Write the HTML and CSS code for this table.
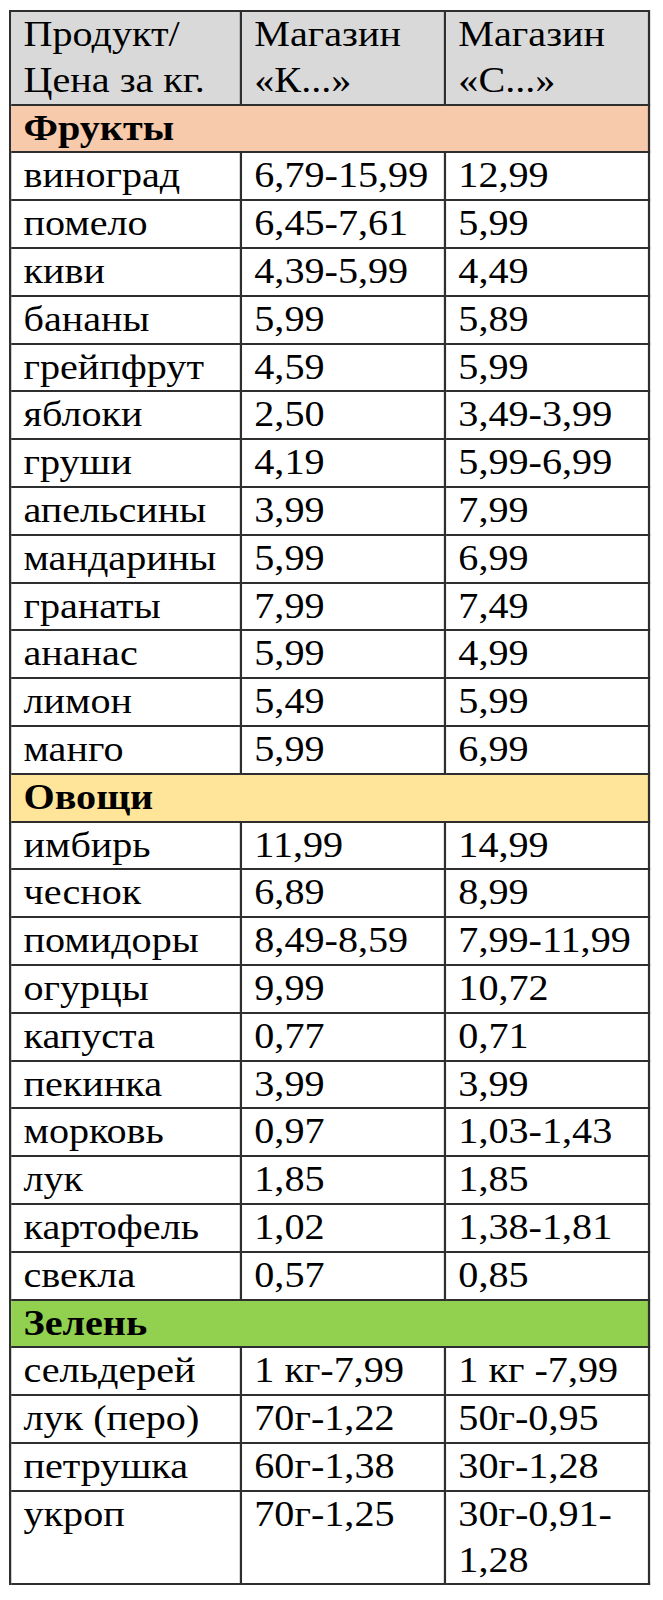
FILE: index.html
```html
<!DOCTYPE html>
<html lang="ru">
<head>
<meta charset="utf-8">
<title>Цены</title>
<link rel="stylesheet" href="styles.css">
</head>
<body>
<table class="prices">
  <colgroup>
    <col class="c1"><col class="c2"><col class="c3">
  </colgroup>
  <thead>
    <tr class="head">
      <th>Продукт/<br>Цена за кг.</th>
      <th>Магазин<br>«К...»</th>
      <th>Магазин<br>«С...»</th>
    </tr>
  </thead>
  <tbody>
    <tr class="cat fruit"><td colspan="3">Фрукты</td></tr>
    <tr><td>виноград</td><td>6,79-15,99</td><td>12,99</td></tr>
    <tr><td>помело</td><td>6,45-7,61</td><td>5,99</td></tr>
    <tr><td>киви</td><td>4,39-5,99</td><td>4,49</td></tr>
    <tr><td>бананы</td><td>5,99</td><td>5,89</td></tr>
    <tr><td>грейпфрут</td><td>4,59</td><td>5,99</td></tr>
    <tr><td>яблоки</td><td>2,50</td><td>3,49-3,99</td></tr>
    <tr><td>груши</td><td>4,19</td><td>5,99-6,99</td></tr>
    <tr><td>апельсины</td><td>3,99</td><td>7,99</td></tr>
    <tr><td>мандарины</td><td>5,99</td><td>6,99</td></tr>
    <tr><td>гранаты</td><td>7,99</td><td>7,49</td></tr>
    <tr><td>ананас</td><td>5,99</td><td>4,99</td></tr>
    <tr><td>лимон</td><td>5,49</td><td>5,99</td></tr>
    <tr><td>манго</td><td>5,99</td><td>6,99</td></tr>
    <tr class="cat veg"><td colspan="3">Овощи</td></tr>
    <tr><td>имбирь</td><td>11,99</td><td>14,99</td></tr>
    <tr><td>чеснок</td><td>6,89</td><td>8,99</td></tr>
    <tr><td>помидоры</td><td>8,49-8,59</td><td>7,99-11,99</td></tr>
    <tr><td>огурцы</td><td>9,99</td><td>10,72</td></tr>
    <tr><td>капуста</td><td>0,77</td><td>0,71</td></tr>
    <tr><td>пекинка</td><td>3,99</td><td>3,99</td></tr>
    <tr><td>морковь</td><td>0,97</td><td>1,03-1,43</td></tr>
    <tr><td>лук</td><td>1,85</td><td>1,85</td></tr>
    <tr><td>картофель</td><td>1,02</td><td>1,38-1,81</td></tr>
    <tr><td>свекла</td><td>0,57</td><td>0,85</td></tr>
    <tr class="cat green"><td colspan="3">Зелень</td></tr>
    <tr><td>сельдерей</td><td>1 кг-7,99</td><td>1 кг -7,99</td></tr>
    <tr><td>лук (перо)</td><td>70г-1,22</td><td>50г-0,95</td></tr>
    <tr><td>петрушка</td><td>60г-1,38</td><td>30г-1,28</td></tr>
    <tr><td>укроп</td><td>70г-1,25</td><td>30г-0,91-<br>1,28</td></tr>
  </tbody>
</table>
</body>
</html>
```
FILE: styles.css
```css
html, body {
  margin: 0;
  padding: 0;
  background: #ffffff;
}

body {
  padding: 10px 0 0 9px;
  font-family: "Liberation Serif", "Times New Roman", serif;
  color: #000000;
}

/* the source table is rendered slightly wide; stretch it horizontally */
.prices {
  border-collapse: separate;
  border-spacing: 0;
  table-layout: fixed;
  width: 575px;
  border-top: 2px solid #2e2e2e;
  border-left: 2px solid #2e2e2e;
  transform: scaleX(1.115);
  transform-origin: 0 0;
}

.c1 { width: 207px; }
.c2 { width: 183px; }
.c3 { width: 183px; }

.prices th,
.prices td {
  box-sizing: border-box;
  padding: 0 11px;
  border-right: 2px solid #2e2e2e;
  border-bottom: 2px solid #2e2e2e;
  font-size: 36px;
  line-height: 45.8px;
  font-weight: normal;
  text-align: left;
  vertical-align: top;
  white-space: nowrap;
}

.head th {
  background: #d9d9d9;
}

.cat td {
  font-weight: bold;
}

.fruit td { background: #f7caac; }
.veg td { background: #ffe599; }
.green td { background: #92d050; }
```
